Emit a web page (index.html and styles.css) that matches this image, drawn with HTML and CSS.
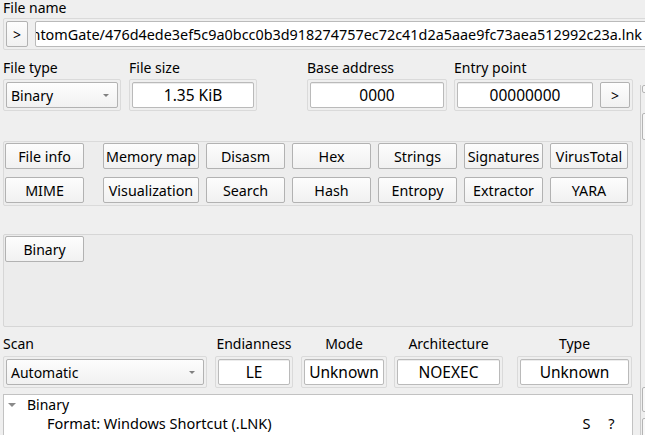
FILE: index.html
```html
<!DOCTYPE html>
<html>
<head>
    <title>Detect It Easy</title>
    <link rel="stylesheet" href="styles.css">
</head>
<body>
    <div class="window">
        <div class="label">File name</div>
        <div class="frame file-row">
            <button class="btn btn-small">&gt;</button>
            <div class="edit edit-path"><span>PhantomGate/476d4ede3ef5c9a0bcc0b3d918274757ec72c41d2a5aae9fc73aea512992c23a.lnk</span></div>
        </div>

        <div class="body">
            <div class="main">
                <div class="info-row">
                    <div class="col col-type">
                        <div class="label">File type</div>
                        <div class="frame">
                            <div class="btn combo">Binary<i class="arrow"></i></div>
                        </div>
                    </div>
                    <div class="col col-size">
                        <div class="label">File size</div>
                        <div class="frame">
                            <div class="edit">1.35 KiB</div>
                        </div>
                    </div>
                    <div class="col col-base">
                        <div class="label">Base address</div>
                        <div class="frame">
                            <div class="edit">0000</div>
                        </div>
                    </div>
                    <div class="col col-entry">
                        <div class="label">Entry point</div>
                        <div class="frame">
                            <div class="edit">00000000</div>
                            <button class="btn btn-go">&gt;</button>
                        </div>
                    </div>
                </div>

                <div class="frame tools">
                    <button class="btn">File info</button>
                    <button class="btn">Memory map</button>
                    <button class="btn">Disasm</button>
                    <button class="btn">Hex</button>
                    <button class="btn">Strings</button>
                    <button class="btn">Signatures</button>
                    <button class="btn">VirusTotal</button>
                    <button class="btn">MIME</button>
                    <button class="btn">Visualization</button>
                    <button class="btn">Search</button>
                    <button class="btn">Hash</button>
                    <button class="btn">Entropy</button>
                    <button class="btn">Extractor</button>
                    <button class="btn">YARA</button>
                </div>

                <div class="panel">
                    <button class="btn btn-type">Binary</button>
                </div>

                <div class="scan-row">
                    <div class="col col-scan">
                        <div class="label">Scan</div>
                        <div class="frame">
                            <div class="btn combo">Automatic<i class="arrow"></i></div>
                        </div>
                    </div>
                    <div class="col col-endian centered">
                        <div class="label">Endianness</div>
                        <div class="frame">
                            <div class="edit">LE</div>
                        </div>
                    </div>
                    <div class="col col-mode centered">
                        <div class="label">Mode</div>
                        <div class="frame">
                            <div class="edit">Unknown</div>
                        </div>
                    </div>
                    <div class="col col-arch centered">
                        <div class="label">Architecture</div>
                        <div class="frame">
                            <div class="edit">NOEXEC</div>
                        </div>
                    </div>
                    <div class="col col-kind centered">
                        <div class="label">Type</div>
                        <div class="frame">
                            <div class="edit">Unknown</div>
                        </div>
                    </div>
                </div>

                <div class="tree">
                    <div class="tree-row">
                        <i class="tree-arrow"></i>
                        <span>Binary</span>
                    </div>
                    <div class="tree-row child">
                        <span class="grow">Format: Windows Shortcut (.LNK)</span>
                        <span class="tag">S</span>
                        <span class="tag">?</span>
                    </div>
                </div>
            </div>

            <div class="side">
                <div class="side-inner">
                    <div class="side-box box-1"></div>
                    <div class="side-box box-2"></div>
                    <div class="side-box box-3"></div>
                    <div class="side-box box-4"></div>
                </div>
            </div>
        </div>
    </div>
</body>
</html>
```

FILE: styles.css
```css
* {
    box-sizing: border-box;
}

body {
    margin: 0;
    width: 645px;
    height: 435px;
    overflow: hidden;
    background-color: #efefef;
    font-family: "Noto Sans", sans-serif;
    font-size: 14px;
    color: #000;
}

.window {
    padding-left: 3px;
}

.label {
    height: 16px;
    line-height: 16px;
    white-space: nowrap;
}

/* light sunken box that Qt draws around each widget */
.frame {
    display: flex;
    gap: 7px;
    padding: 2px;
    border: 1px solid #dadada;
    border-radius: 2px;
}

.btn {
    display: flex;
    align-items: center;
    justify-content: center;
    height: 26px;
    padding: 0;
    border: 1px solid #b2b2b2;
    border-radius: 2px;
    background: linear-gradient(#fdfdfd, #f1f1f1);
    font: inherit;
    color: #000;
    white-space: nowrap;
}

.edit {
    flex: 1;
    display: flex;
    align-items: center;
    justify-content: center;
    height: 26px;
    border: 1px solid #bababa;
    border-radius: 2px;
    background-color: #fff;
    box-shadow: inset 0 1px 0 #ececec;
    font-size: 15.5px;
    white-space: nowrap;
}

.combo {
    flex: 1;
    justify-content: space-between;
    padding: 0 8px 0 4px;
}

.arrow {
    width: 0;
    height: 0;
    border-left: 3px solid transparent;
    border-right: 3px solid transparent;
    border-top: 3px solid #808080;
}

/* file name */
.file-row {
    width: 647px;
    margin-top: 2px;
}

.btn-small {
    width: 22px;
}

.edit-path {
    justify-content: flex-end;
    overflow: hidden;
    padding: 0 4px 0 0;
    box-shadow: none;
    font-size: 14.4px;
}

.edit-path span {
    flex-shrink: 0;
}

.body {
    display: flex;
}

.main {
    width: 630px;
}

/* file type / size / address row */
.info-row {
    display: flex;
    margin-top: 10px;
}

.info-row .frame {
    margin-top: 3px;
}

.col-type { width: 118px; }
.col-size { width: 128px; margin-left: 8px; }
.col-base { width: 140px; margin-left: 50px; }
.col-entry { width: 179px; margin-left: 7px; }

.btn-go {
    width: 30px;
}

/* tool buttons */
.tools {
    display: grid;
    grid-template-columns: 91px 96px 79px 79px 79px 79px 78px;
    row-gap: 8px;
    column-gap: 7px;
    margin-top: 30px;
    padding: 1px 2px 2px 1px;
    background-color: #ededed;
}

.tools .btn {
    font-size: 14.3px;
}

.tools .btn:nth-child(7n+1) {
    width: 79px;
}

.panel {
    height: 93px;
    margin-top: 28px;
    padding: 1px;
    border: 1px solid #d6d6d6;
    border-radius: 2px;
    background-color: #ececec;
}

.btn-type {
    width: 79px;
}

/* scan row */
.scan-row {
    display: flex;
    margin-top: 9px;
}

.scan-row .frame {
    margin-top: 4px;
}

.centered .label {
    text-align: center;
}

.col-scan { width: 204px; }
.col-endian { width: 78px; margin-left: 8px; }
.col-mode { width: 86px; margin-left: 8px; }
.col-arch { width: 109px; margin-left: 7px; }
.col-kind { width: 115px; margin-left: 14px; }

/* result tree */
.tree {
    height: 60px;
    margin-top: 6px;
    padding: 1px 8px 0 0;
    border: 1px solid #c2c2c2;
    background-color: #fff;
}

.tree-row {
    display: flex;
    align-items: center;
    height: 18px;
    line-height: 18px;
    white-space: nowrap;
}

.tree-arrow {
    width: 0;
    height: 0;
    margin: 0 11px 0 4px;
    border-left: 4px solid transparent;
    border-right: 4px solid transparent;
    border-top: 4px solid #8a8a8a;
}

.tree-row.child {
    padding-left: 43px;
    font-size: 14.5px;
}

.grow {
    flex: 1;
}

.tag {
    width: 25px;
    text-align: center;
}

/* edge of the neighbouring pane */
.side {
    margin-left: 7px;
    padding-top: 31px;
}

.side-inner {
    width: 8px;
    height: 360px;
    border-left: 1px solid #cbcbcb;
}

.side-box {
    margin-left: 1px;
    width: 12px;
    border: 1px solid #b4b4b4;
    border-radius: 2px;
    background-color: #f8f8f8;
}

.box-1 { margin-top: 4px; height: 8px; }
.box-2 { margin-top: 20px; height: 27px; }
.box-3 { margin-top: 247px; height: 25px; }
.box-4 { margin-top: 6px; height: 30px; }
```
